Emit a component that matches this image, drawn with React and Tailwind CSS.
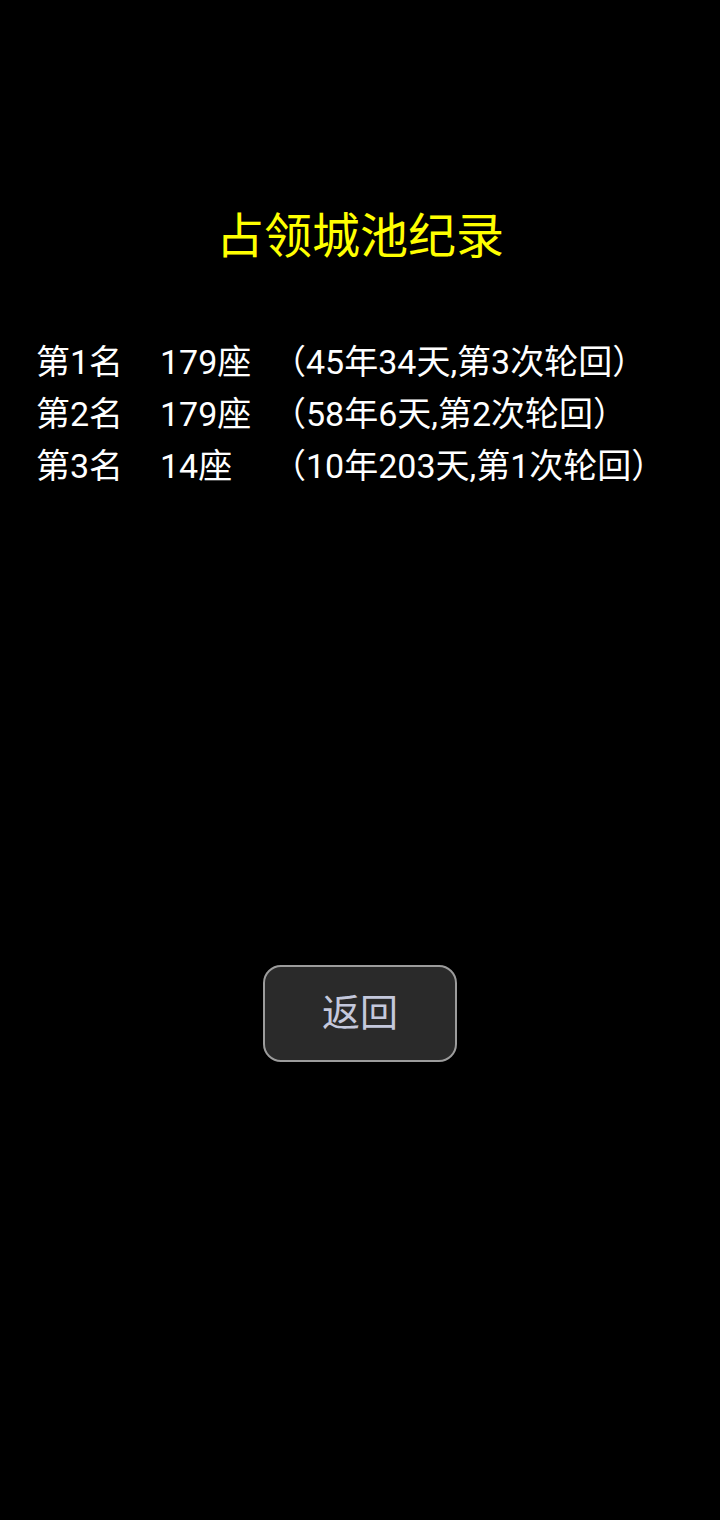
const rows = [
  { rank: "第1名", count: "179座", detail: "（45年34天,第3次轮回）" },
  { rank: "第2名", count: "179座", detail: "（58年6天,第2次轮回）" },
  { rank: "第3名", count: "14座", detail: "（10年203天,第1次轮回）" },
];

export default function App() {
  return (
    <div
      className="w-[720px] h-[1520px] bg-black flex flex-col items-center"
      style={{ fontFamily: 'Roboto, "Noto Sans CJK SC", sans-serif' }}
    >
      <h1 className="mt-[209px] text-[48px] leading-[56px] text-[#ffff00] font-normal">
        占领城池纪录
      </h1>

      <div className="mt-[71px] self-stretch pl-[36px] text-white text-[34px]">
        {rows.map((r) => (
          <div key={r.rank} className="grid grid-cols-[124px_112px_1fr] h-[52px] items-center whitespace-nowrap">
            <span>{r.rank}</span>
            <span>{r.count}</span>
            <span>{r.detail}</span>
          </div>
        ))}
      </div>

      <button className="mt-[473px] w-[194px] h-[97px] rounded-[18px] bg-[#2a2a2a] border-2 border-[#9c9c9c] text-[#c4c8dc] text-[38px]">
        返回
      </button>
    </div>
  );
}
